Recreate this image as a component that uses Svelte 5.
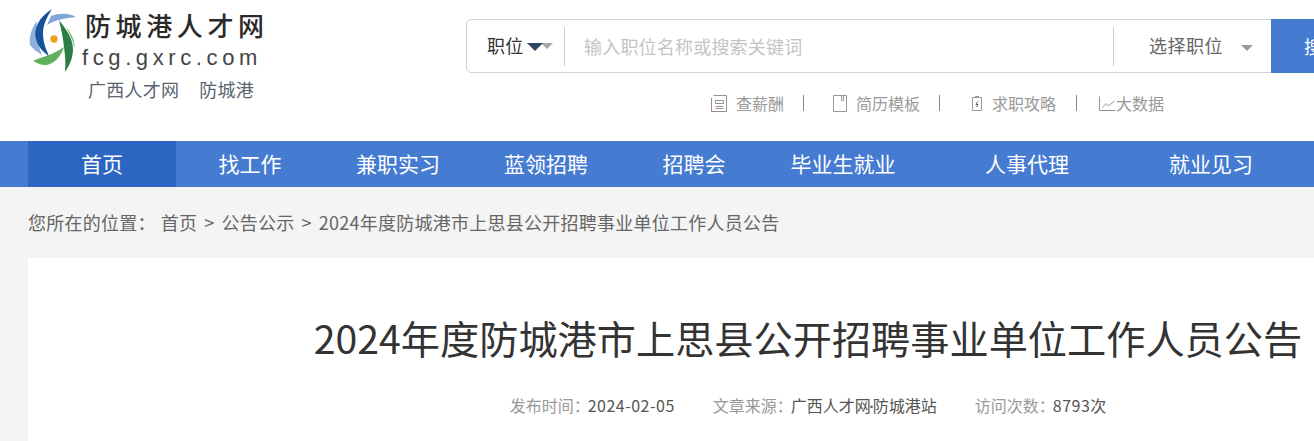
<script>
  const nav = [
    { label: '首页', cls: 'active' },
    { label: '找工作', cls: '' },
    { label: '兼职实习', cls: '' },
    { label: '蓝领招聘', cls: '' },
    { label: '招聘会', cls: '' },
    { label: '毕业生就业', cls: 'w150' },
    { label: '人事代理', cls: 'w218' },
    { label: '就业见习', cls: 'w150' }
  ];
</script>

<div class="page">
  <header class="header">
    <div class="brand">
      <div class="logo-row">
        <svg class="logo" width="70" height="70" viewBox="0 0 70 70" aria-hidden="true">
          <path d="M53 12C46 8 36 8 28 11L24 20C32 15 42 13 53 12Z" fill="#7fa6d8"/>
          <path d="M14 16C8 24 6 32 7 40C10 44 14 47 19 50C15 40 13 28 14 16Z" fill="#8db0dc"/>
          <path d="M29 4C16 12 10 24 13 34C15 42 20 47 26 51C22 42 20 36 20 28C20 20 24 12 29 4Z" fill="#17539c"/>
          <path d="M10 56C18 52 30 50 41 42C38 52 30 60 22 60C18 60 14 58 10 56Z" fill="#63b05c"/>
          <path d="M43 22C48 28 52 36 52 44C51 38 47 30 43 22Z" fill="#6cb070"/>
          <path d="M36 15C41 22 50 32 50 44C50 52 47 60 42 67C43 58 42 50 41 42C40 32 38 24 36 15Z" fill="#2c7d46"/>
          <circle cx="31" cy="34" r="3.7" fill="#f0a020"/>
        </svg>
        <div class="logo-text">
          <div class="logo-cn">防城港人才网</div>
          <div class="logo-en">fcg.gxrc.com</div>
        </div>
      </div>
      <div class="sub"><span>广西人才网</span><span>防城港</span></div>
    </div>

    <div class="tools">
      <div class="search">
        <div class="type">职位<i class="arrow over"></i><i class="arrow dark"></i></div>
        <div class="placeholder">输入职位名称或搜索关键词</div>
        <div class="select">选择职位<i class="arrow"></i></div>
        <div class="btn">搜索</div>
      </div>
      <div class="links">
        <span class="link l1">
          <svg width="16" height="17" viewBox="0 0 16 17" fill="none" stroke="#9c9086"><path d="M2.5 .5H15.5V16.5H.5V3"/><path d="M4.5 5.5H12.5V8.5H4.5ZM4.5 11.5H12.5M4.5 13.5H12.5"/></svg>
          查薪酬
        </span>
        <i class="sep"></i>
        <span class="link l2">
          <svg width="14" height="17" viewBox="0 0 14 17" fill="none" stroke="#9c9894"><path d="M.5 .5H13.5V16.5H.5Z"/><path d="M8.5 .5V5.5H10.5V.5"/></svg>
          简历模板
        </span>
        <i class="sep"></i>
        <span class="link l3">
          <svg width="10" height="17" viewBox="0 0 10 17" fill="none" stroke="#9c9894"><path d="M.5 2.5H9.5V15.5H.5Z"/><path d="M3 1.5H7"/><path d="M5.8 6.5L4 9.5H6L4.4 12" stroke="#666"/></svg>
          求职攻略
        </span>
        <i class="sep last"></i>
        <span class="link l4">
          <svg width="17" height="17" viewBox="0 0 17 17" fill="none" stroke="#9c948e"><path d="M.5 1.5V15.5H16.5"/><path d="M3.5 12.5L7 8.5L9.5 11L15.5 6"/></svg>
          大数据
        </span>
      </div>
    </div>
  </header>

  <nav class="nav">
    {#each nav as item}
      <a class="nav-item {item.cls}" href="#top">{item.label}</a>
    {/each}
  </nav>

  <main class="main">
    <div class="crumbs">
      <span class="here">您所在的位置：</span><span>首页</span><span class="gt">&gt;</span><span>公告公示</span><span class="gt">&gt;</span><span>2024年度防城港市上思县公开招聘事业单位工作人员公告</span>
    </div>
    <article class="card">
      <h1>2024年度防城港市上思县公开招聘事业单位工作人员公告</h1>
      <div class="meta">
        <span><b>发布时间：</b><em>2024-02-05</em></span>
        <span><b>文章来源：</b>广西人才网<u>·</u>防城港站</span>
        <span><b>访问次数：</b><em>8793</em>次</span>
      </div>
    </article>
  </main>
</div>

<style>
  :global(body) {
    margin: 0;
    overflow: hidden;
    background: #f4f4f4;
  }
  .page {
    width: 1616px;
    height: 441px;
    overflow: hidden;
    font-family: "Noto Sans CJK SC", "Noto Sans", sans-serif;
    background: #f4f4f4;
  }
  .header {
    height: 141px;
    background: #fff;
    display: flex;
    padding-left: 23px;
  }
  .brand {
    width: 443px;
  }
  .logo-row {
    display: flex;
    padding-top: 5px;
    height: 70px;
  }
  .logo-text {
    margin-left: -11px;
    width: 190px;
  }
  .logo-cn {
    font-size: 26px;
    line-height: 30px;
    letter-spacing: 4.6px;
    margin: 5px 0 0 3px;
    color: #2a2a2a;
    font-weight: 500;
    white-space: nowrap;
  }
  .logo-en {
    font-family: "Liberation Sans", sans-serif;
    font-size: 22px;
    line-height: 26px;
    letter-spacing: 4.6px;
    color: #444;
    white-space: nowrap;
    margin-top: 5px;
  }
  .sub {
    display: flex;
    gap: 20px;
    margin: 1px 0 0 65px;
    font-size: 18px;
    line-height: 26px;
    letter-spacing: 0.25px;
    color: #5a6470;
  }
  .tools {
    flex: 1;
    padding-top: 19px;
  }
  .search {
    display: flex;
    align-items: center;
    position: relative;
    width: 900px;
    height: 54px;
    box-sizing: border-box;
    border: 1px solid #d2d2d2;
    border-radius: 5px;
    font-size: 18px;
    letter-spacing: 0.2px;
  }
  .type {
    width: 98px;
    height: 39px;
    line-height: 37px;
    box-sizing: border-box;
    padding-left: 20px;
    color: #333;
    border-right: 1px solid #ccc;
    position: relative;
    flex: none;
  }
  .arrow {
    display: inline-block;
    width: 0;
    height: 0;
    border: 6px solid transparent;
    border-top: 6px solid #999;
    border-bottom: 0;
  }
  .arrow.dark {
    position: absolute;
    left: 60px;
    top: 16px;
    border-width: 8px 8px 0;
    border-top-color: #2f4560;
  }
  .arrow.over {
    position: absolute;
    left: 74px;
    top: 16px;
    border-width: 6px 6px 0;
    border-top-color: #a8a8a8;
  }
  .placeholder {
    flex: none;
    width: 548px;
    box-sizing: border-box;
    padding-left: 19px;
    color: #c4c4c4;
    white-space: nowrap;
  }
  .select {
    flex: none;
    width: 158px;
    height: 39px;
    line-height: 37px;
    box-sizing: border-box;
    border-left: 1px solid #ccc;
    padding-left: 35px;
    color: #666;
    white-space: nowrap;
    letter-spacing: 0.5px;
  }
  .select .arrow {
    margin-left: 18px;
    vertical-align: 2px;
  }
  .btn {
    flex: none;
    align-self: stretch;
    margin: -1px 0;
    width: 96px;
    background: #457bd0;
    color: #fff;
    font-size: 18px;
    text-align: center;
    line-height: 54px;
    white-space: nowrap;
    letter-spacing: 0;
    box-sizing: border-box;
    padding-left: 6px;
  }
  .links {
    display: flex;
    align-items: center;
    height: 24px;
    margin-top: 18px;
    font-size: 16px;
    color: #999;
  }
  .link {
    display: inline-flex;
    align-items: center;
    white-space: nowrap;
  }
  .l1 { margin-left: 245px; gap: 9px; }
  .l2 { margin-left: 29px; gap: 9px; }
  .l3 { margin-left: 32px; gap: 10px; }
  .l4 { margin-left: 22px; gap: 0; }
  .sep {
    width: 1px;
    height: 16px;
    background: #7d8a98;
    margin-left: 19px;
  }
  .sep.last { margin-left: 20px; }
  .nav {
    height: 46px;
    display: flex;
    background: #457bd0;
    padding-left: 28px;
  }
  .nav-item {
    width: 148px;
    text-align: center;
    color: #fff;
    font-size: 21px;
    line-height: 45px;
    text-decoration: none;
  }
  .nav-item.active { background: #2c66c2; }
  .nav-item.w150 { width: 150px; }
  .nav-item.w218 { width: 218px; }
  .main {
    padding: 0 28px;
  }
  .crumbs {
    height: 71px;
    line-height: 71px;
    font-size: 18px;
    letter-spacing: 0.25px;
    color: #666;
    white-space: nowrap;
  }
  .here { margin-right: 5px; }
  .gt { margin: 0 7px; }
  .card {
    background: #fff;
    height: 200px;
    padding-top: 51px;
    text-align: center;
  }
  h1 {
    margin: 0;
    font-size: 39.2px;
    font-weight: 400;
    line-height: 56px;
    color: #333;
    white-space: nowrap;
  }
  .meta {
    display: flex;
    justify-content: center;
    gap: 38px;
    margin-top: 28px;
    font-size: 16px;
    line-height: 24px;
    color: #555;
  }
  .meta b {
    font-weight: 400;
    color: #999;
    margin-right: -2px;
  }
  .meta em {
    font-style: normal;
    letter-spacing: 0.5px;
  }
  .meta u {
    text-decoration: none;
    font-family: "Liberation Sans", sans-serif;
    font-weight: 700;
    margin: 0 -1.7px;
    color: #666;
  }
</style>
